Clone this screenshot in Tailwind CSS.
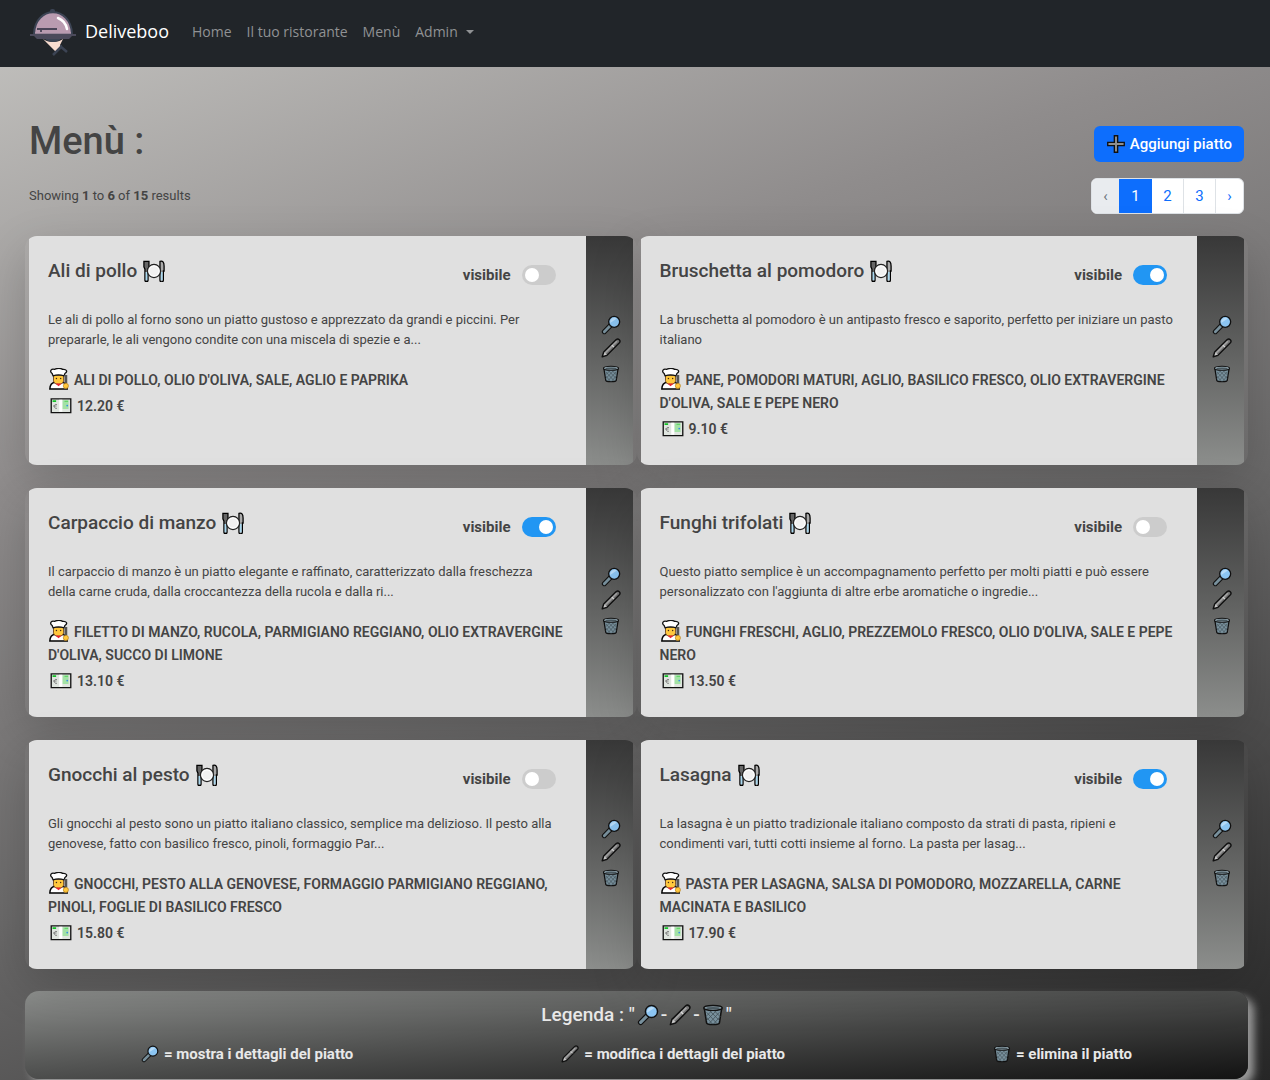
<!DOCTYPE html>
<html lang="it">
<head>
<meta charset="utf-8">
<meta name="viewport" content="width=device-width, initial-scale=1">
<title>Deliveboo - Menù</title>
<script src="https://cdn.jsdelivr.net/npm/@tailwindcss/browser@4"></script>
</head>
<body class="min-h-screen bg-[linear-gradient(160deg,#c5c4c1_0%,#8f8c8c_32%,#6a6969_60%,#262626_100%)] font-[Roboto,sans-serif] text-[#444]">

<svg class="hidden" aria-hidden="true">
  <symbol id="glass" viewBox="0 0 24 24">
    <path d="M12.500 11.500L4 20" stroke="#111" stroke-width="6" stroke-linecap="round"/>
    <path d="M12.500 11.500L4 20" stroke="#78909c" stroke-width="3.400" stroke-linecap="round"/>
    <circle cx="15.800" cy="8.200" r="6.600" fill="#8cc5f2" stroke="#111" stroke-width="1.600"/>
    <path d="M11 9.500a5.200 5.200 0 0 1 8-5.200z" fill="#b8dcf8"/>
  </symbol>
  <symbol id="pen" viewBox="0 0 24 24">
    <path d="M1.500 22.500l1.700-5.700L18.300 1.900a2.700 2.700 0 0 1 3.800 3.800L7.200 20.800z" fill="#777" stroke="#111" stroke-width="1.700" stroke-linejoin="round"/>
    <path d="M5 18L19 4" stroke="#a5a5a5" stroke-width="1.800"/>
    <path d="M3 21l1.300-4 2.700 2.700z" fill="#ccc"/>
    <path d="M13 8.500l2.500 2.500" stroke="#ddd" stroke-width="1.300"/>
  </symbol>
  <symbol id="bin" viewBox="0 0 24 24">
    <path d="M2.500 4.500L5 20.500c.3 2.400 13.700 2.400 14 0l2.500-16z" fill="#78909c" stroke="#111" stroke-width="1.700"/>
    <path d="M5 9l11 12M4.500 14l7 8M8 7l11 11M13 7l7 7M19 9L8 21M19.500 14l-7 8M16 7L5 18M11 7l-6 6" stroke="#3f4d54" stroke-width=".8"/>
    <ellipse cx="12" cy="4.300" rx="10" ry="2.700" fill="#90a4ae" stroke="#111" stroke-width="1.500"/>
    <ellipse cx="12" cy="4.500" rx="7.500" ry="1.200" fill="#4b5a61"/>
  </symbol>
  <symbol id="plate" viewBox="0 0 24 24">
    <path d="M1 1.500h5.500v6L5.500 10v12a1.200 1.200 0 0 1-3.400 0V10L1 7.500z" fill="#666" stroke="#000" stroke-width="1.400"/>
    <path d="M3.800 13v9" stroke="#a9d8ef" stroke-width="2"/>
    <path d="M18.500 1.500c3-1 4.500 1 4.500 5v5.500h-.8v10a1.400 1.400 0 0 1-3.700 0z" fill="#aaa" stroke="#000" stroke-width="1.400"/>
    <path d="M20.400 13v9" stroke="#a9d8ef" stroke-width="2"/>
    <circle cx="12" cy="12" r="7.200" fill="#fff" stroke="#222" stroke-width="1.400"/>
    <circle cx="12" cy="12" r="5" fill="#f1f1f1"/>
  </symbol>
  <symbol id="cook" viewBox="0 0 24 24">
    <path d="M2 23c0-5 2-7 6-7.500h7c4 .5 6 2.500 6 7.500z" fill="#fff" stroke="#000" stroke-width="1.600"/>
    <path d="M6 8v6c0 5 11 5 11 0V8z" fill="#ffc83d" stroke="#6d4520" stroke-width="1"/>
    <path d="M5.500 8.500L4.500 6C1 3.500 4 .5 7 1.500 10 .3 14 .3 16 1.500c4-.6 6 2.300 2.500 4.500l-1 2.500c-3-1-9-1-12 0z" fill="#fff" stroke="#111" stroke-width="1.400"/>
    <circle cx="9.200" cy="11.500" r=".8" fill="#4b2d16"/><circle cx="13.800" cy="11.500" r=".8" fill="#4b2d16"/>
    <path d="M8 17h7l-3.500 3z" fill="#e8262d"/>
    <path d="M19.500 7.500v9" stroke="#555" stroke-width="3"/>
    <circle cx="19.500" cy="19.500" r="2.800" fill="#ffc83d" stroke="#b47a16" stroke-width=".7"/>
  </symbol>
  <symbol id="note" viewBox="0 0 24 18">
    <path d="M1 1h22v15.500H1z" fill="#dfe5df" stroke="#111" stroke-width="1.500"/>
    <path d="M13.500 2.500h7v10h-7z" fill="#a3e2a5"/><path d="M10 2h3.500v13.500H10z" fill="#fff"/>
    <path d="M2.500 2.500h4v2h-4z" fill="#13c026"/><path d="M16 3h4v1.500h-4z" fill="#64d66a"/>
    <path d="M7.500 7.500c-4-2-4 5.500 0 4M3 9h4" fill="none" stroke="#777" stroke-width="1"/>
    <circle cx="19" cy="8.500" r="1" fill="#378ce7"/>
  </symbol>
  <symbol id="plus" viewBox="0 0 24 24">
    <path d="M9.800 1h4.400v8.800H23v4.400h-8.800V23H9.800v-8.800H1V9.800h8.800z" fill="#8f8f8f" stroke="#111" stroke-width="1.800"/>
  </symbol>
</svg>

<nav class="flex h-[67px] items-center bg-[#212529] pl-[29px] pb-1 font-['Open_Sans',sans-serif] text-[14px] text-[#909294]">
  <a href="#" class="flex items-center gap-2 text-[18px] text-white">
    <svg class="h-12 w-12" viewBox="0 0 48 48" aria-hidden="true">
      <rect x="21" y="1" width="5" height="5" rx="2" fill="#3c4454"/>
      <path d="M5 26C6-3 42-3 43 26z" fill="#b99bb0" stroke="#3c4454" stroke-width="2"/>
      <path d="M8 21h20M12 21v3" stroke="#4a4558" stroke-width="1.800"/>
      <path d="M29 10c5 2 8 6 9 11" fill="none" stroke="#fff" stroke-width="2.500" stroke-linecap="round"/>
      <path d="M6 25h36" stroke="#b99bb0" stroke-width="1.500"/>
      <path d="M1 26h46v2H43l-3 3H8l-3-3H1z" fill="#4b4a5b"/>
      <path d="M14 31c5 4 15 4 20 0l-3 6 1 2-5 5z" fill="#f8dccf"/>
      <path d="M16 31h16c-4 4-12 4-16 0z" fill="#3c4454"/>
      <path d="M31 38l7 6M33 38l-9 9" stroke="#3c4454" stroke-width="2.500"/>
    </svg>
    Deliveboo
  </a>
  <div class="ml-[23px] flex gap-[15px]">
    <a href="#">Home</a>
    <a href="#">Il tuo ristorante</a>
    <a href="#">Menù</a>
    <a href="#" class="flex items-center gap-2">Admin <span class="border-x-4 border-t-4 border-x-transparent border-t-[#909294]"></span></a>
  </div>
</nav>

<main class="pl-[25px] pr-[22px] pt-[49px]">
  <header class="flex justify-between px-1">
    <div>
      <h1 class="text-[38px] leading-[50px] font-medium">Menù :</h1>
      <p class="mt-5 text-[13px] leading-5">Showing <b class="font-bold">1</b> to <b class="font-bold">6</b> of <b class="font-bold">15</b> results</p>
    </div>
    <div class="flex flex-col items-end gap-4 pt-[10px]">
      <button class="flex h-9 items-center gap-[5px] rounded-md bg-[#0d6efd] pl-[13px] pr-3 text-[15px] font-medium text-white"><svg class="h-[18px] w-[18px]" aria-hidden="true"><use href="#plus"/></svg>Aggiungi piatto</button>
      <nav aria-label="Pagine" class="flex h-9 overflow-hidden rounded-md border border-[#dee2e6] bg-white text-center text-[15px] leading-[34px] text-[#0d6efd]">
        <span class="w-[27px] bg-[#e9ecef] text-[#6c757d]">‹</span>
        <a href="#" class="-my-px w-[33px] bg-[#0d6efd] leading-9 text-white">1</a>
        <a href="#" class="w-8 border-r border-[#dee2e6]">2</a>
        <a href="#" class="w-8 border-r border-[#dee2e6]">3</a>
        <a href="#" class="w-[27px]">›</a>
      </nav>
    </div>
  </header>

  <section id="dishes" class="mt-[22px] grid grid-cols-2 gap-y-[23px]"></section>

  <footer class="mt-[22px] h-[88px] rounded-[14px] bg-linear-to-br from-[#8e908e] to-[#131313] pt-2.5 text-[#e8e8e8] shadow-[6px_6px_8px_#9a9a9a]">
    <h2 class="flex h-7 items-center justify-center text-[19px] font-medium"><span class="mr-0.5">Legenda : "</span><svg class="h-[22px] w-[22px]" aria-hidden="true"><use href="#glass"/></svg><span class="mx-0.5">-</span><svg class="h-[22px] w-[22px]" aria-hidden="true"><use href="#pen"/></svg><span class="mx-0.5">-</span><svg class="h-[22px] w-[22px]" aria-hidden="true"><use href="#bin"/></svg><span class="ml-0.5">"</span></h2>
    <ul class="mt-[15px] flex justify-around px-3 text-[15px] leading-5 font-bold">
      <li class="flex items-center gap-[5px]"><svg class="h-[18px] w-[18px]" aria-hidden="true"><use href="#glass"/></svg>= mostra i dettagli del piatto</li>
      <li class="flex items-center gap-[5px]"><svg class="h-[18px] w-[18px]" aria-hidden="true"><use href="#pen"/></svg>= modifica i dettagli del piatto</li>
      <li class="flex items-center gap-[5px]"><svg class="h-[18px] w-[18px]" aria-hidden="true"><use href="#bin"/></svg>= elimina il piatto</li>
    </ul>
  </footer>
</main>

<script>
const dishes = [
  ["Ali di pollo", false, "Le ali di pollo al forno sono un piatto gustoso e apprezzato da grandi e piccini. Per prepararle, le ali vengono condite con una miscela di spezie e a...", "Ali di pollo, olio d'oliva, sale, aglio e paprika", "12.20"],
  ["Bruschetta al pomodoro", true, "La bruschetta al pomodoro è un antipasto fresco e saporito, perfetto per iniziare un pasto italiano", "Pane, pomodori maturi, aglio, basilico fresco, olio extravergine d'oliva, sale e pepe nero", "9.10"],
  ["Carpaccio di manzo", true, "Il carpaccio di manzo è un piatto elegante e raffinato, caratterizzato dalla freschezza<br>della carne cruda, dalla croccantezza della rucola e dalla ri...", "Filetto di manzo, rucola, parmigiano reggiano, olio extravergine d'oliva, succo di limone", "13.10"],
  ["Funghi trifolati", false, "Questo piatto semplice è un accompagnamento perfetto per molti piatti e può essere personalizzato con l'aggiunta di altre erbe aromatiche o ingredie...", "Funghi freschi, aglio, prezzemolo fresco, olio d'oliva, sale e pepe nero", "13.50"],
  ["Gnocchi al pesto", false, "Gli gnocchi al pesto sono un piatto italiano classico, semplice ma delizioso. Il pesto alla genovese, fatto con basilico fresco, pinoli, formaggio Par...", "Gnocchi, pesto alla genovese, formaggio parmigiano reggiano, pinoli, foglie di basilico fresco", "15.80"],
  ["Lasagna", true, "La lasagna è un piatto tradizionale italiano composto da strati di pasta, ripieni e condimenti vari, tutti cotti insieme al forno. La pasta per lasag...", "Pasta per lasagna, salsa di pomodoro, mozzarella, carne macinata e basilico", "17.90"],
];

document.getElementById("dishes").innerHTML = dishes.map(([name, visible, text, ingredients, price]) => `
  <article class="flex min-h-[229px] overflow-hidden rounded-xl px-1 shadow-[0_16px_48px_rgba(0,0,0,0.175)]">
    <div class="flex-1 bg-[#e0e0e0] px-[19px] pt-[21px] pb-4">
      <div class="flex items-start justify-between pr-[11px]">
        <h2 class="flex items-center gap-1.5 text-[19px] leading-7 font-medium">${name}<svg class="h-[22px] w-[22px]" aria-hidden="true"><use href="#plate"/></svg></h2>
        <label class="mt-2 flex h-5 items-center gap-[11px] text-[15px] font-bold">visibile
          <input type="checkbox" ${visible ? "checked" : ""} class="h-5 w-[34px] appearance-none rounded-full bg-[#ccc] p-[3px] before:block before:h-3.5 before:w-3.5 before:rounded-full before:bg-white before:content-[''] checked:bg-[#2196f3] checked:before:ml-3.5">
        </label>
      </div>
      <p class="mt-[25px] text-[13px] leading-5">${text}</p>
      <p class="mt-[19px] text-[14px] leading-[23px] font-semibold uppercase"><svg class="-mt-1 mr-1 inline h-[22px] w-[22px]" aria-hidden="true"><use href="#cook"/></svg>${ingredients}</p>
      <p class="mt-0.5 flex h-6 items-center gap-[5px] pl-0.5 text-[14px] font-semibold"><svg class="h-4 w-[22px]" aria-hidden="true"><use href="#note"/></svg>${price} €</p>
    </div>
    <div class="flex w-[47px] flex-col items-center justify-center gap-[3px] bg-linear-to-b from-[#383838] to-[#8c8e8c] pb-1 pl-[3px]">
      <button aria-label="Mostra ${name}"><svg class="block h-5 w-5" aria-hidden="true"><use href="#glass"/></svg></button>
      <button aria-label="Modifica ${name}"><svg class="block h-5 w-5" aria-hidden="true"><use href="#pen"/></svg></button>
      <button aria-label="Elimina ${name}" class="mt-1"><svg class="block h-[18px] w-[18px]" aria-hidden="true"><use href="#bin"/></svg></button>
    </div>
  </article>`).join("");
</script>
</body>
</html>
